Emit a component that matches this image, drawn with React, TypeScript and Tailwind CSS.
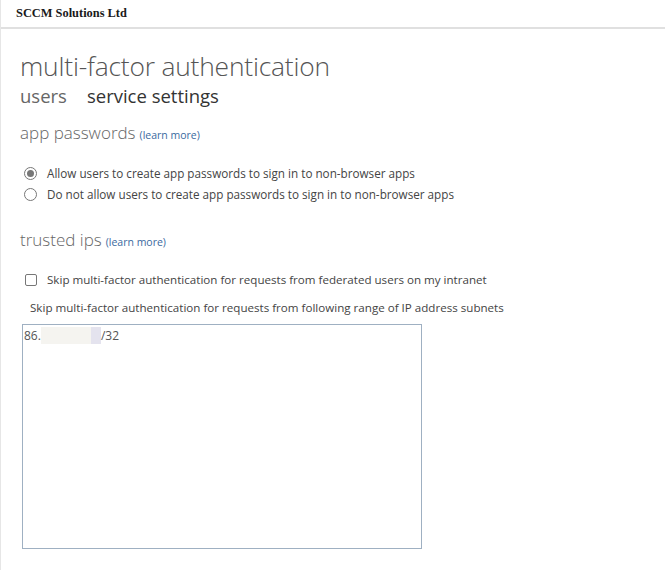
export default function App() {
	return (
		<div className="w-[665px] h-[570px] bg-white border-l border-[#e6e6e6] overflow-hidden font-['Open_Sans',sans-serif]">
			<div className="h-[29px] border-b-2 border-[#e0e0e0] pl-[15px] pt-[3px] leading-[16px]">
				<span className="font-['Liberation_Serif',serif] font-bold text-[12.4px] text-[#1a1a1a]">
					SCCM Solutions Ltd
				</span>
			</div>
			<div className="pl-[19px]">
				<h1 className="mt-[20px] text-[26.4px] font-light leading-[34px] text-[#555] tracking-[-0.2px]">
					multi-factor authentication
				</h1>
				<div className="flex gap-[20px] text-[18.5px] leading-[22px] mt-[2px]">
					<span className="text-[#666]">users</span>
					<span className="text-[#333]">service settings</span>
				</div>
				<div className="mt-[13px] flex items-baseline gap-[4px]">
					<span className="text-[17px] font-light text-[#666]">app passwords</span>
					<span className="text-[10.5px] text-[#3b6aa0]">(learn more)</span>
				</div>
				<div className="mt-[19px] flex flex-col gap-[4px] text-[11.7px] leading-[17px] text-[#444]">
					<label className="flex items-center gap-[10px] pl-[4px]">
						<span className="w-[13px] h-[13px] rounded-full border border-[#777] flex items-center justify-center">
							<span className="w-[7px] h-[7px] rounded-full bg-[#777]" />
						</span>
						Allow users to create app passwords to sign in to non-browser apps
					</label>
					<label className="flex items-center gap-[10px] pl-[4px]">
						<span className="w-[13px] h-[13px] rounded-full border border-[#777]" />
						Do not allow users to create app passwords to sign in to non-browser apps
					</label>
				</div>
				<div className="mt-[24px] flex items-baseline gap-[4px]">
					<span className="text-[17px] font-light text-[#666]">trusted ips</span>
					<span className="text-[10.5px] text-[#3b6aa0]">(learn more)</span>
				</div>
				<label className="mt-[19px] flex items-center gap-[10px] pl-[5px] text-[11.6px] leading-[17px] text-[#444]">
					<span className="w-[12px] h-[12px] rounded-[2px] border border-[#777]" />
					Skip multi-factor authentication for requests from federated users on my intranet
				</label>
				<p className="mt-[11px] pl-[10px] text-[11.6px] leading-[17px] text-[#444]">
					Skip multi-factor authentication for requests from following range of IP address subnets
				</p>
				<div className="mt-[8px] ml-[2px] w-[400px] h-[225px] border border-[#9fb0c2] px-[1px] pt-[2px] text-[12px] text-[#555] flex items-start">
					<span>86.</span>
					<span className="w-[50px] h-[17px] bg-[#f5f4f0]" />
					<span className="w-[10px] h-[17px] bg-[#e4e3ee]" />
					<span>/32</span>
				</div>
			</div>
		</div>
	);
}
